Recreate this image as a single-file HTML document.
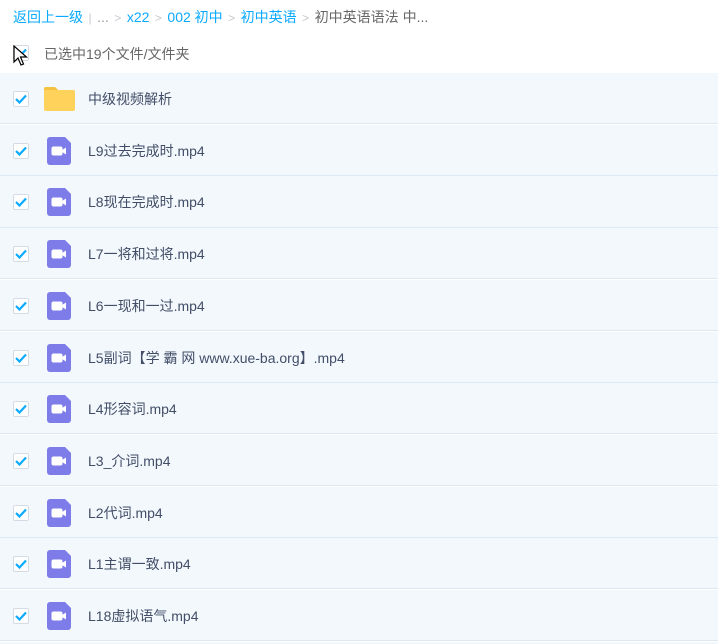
<!DOCTYPE html><html><head><meta charset="utf-8"><style>
html,body{margin:0;width:718px;height:644px;overflow:hidden}
body{background:#fff;font-family:"Liberation Sans","Noto Sans CJK SC",sans-serif;position:relative}
.bc{position:absolute;left:13px;top:7px;font-size:14px;color:#09aaff;white-space:nowrap}
.bc .g{color:#c4c8cc;margin:0 5.5px;font-size:12px}.bc .d{color:#666}
.sel{position:absolute;left:44px;top:44px;font-size:14px;color:#666}
.cb{position:absolute;width:14px;height:14px;border:1px solid #d4dbe4;border-radius:2px;background:#fff}
.cb svg{position:absolute;left:1px;top:2px}
.row{position:absolute;left:0;width:718px;height:50.2px;background:#f3f8fd;border-bottom:1.5px solid #dce8f3}
.row .t{position:absolute;left:88px;top:16px;font-size:14px;color:#424e67}
.ic{position:absolute;left:47px;top:12px;width:24px;height:28px}
</style></head><body>
<div class="bc">返回上一级<span class="g">|</span><span style="color:#999">...</span><span class="g">&gt;</span>x22<span class="g">&gt;</span>002 初中<span class="g">&gt;</span>初中英语<span class="g">&gt;</span><span class="d">初中英语语法 中...</span></div>
<div class="cb" style="left:13px;top:45px"><svg width="12" height="10"><path d="M1 5l3.5 3.5L11 1.5" stroke="#09aaff" stroke-width="2.2" fill="none"/></svg></div>
<svg style="position:absolute;left:13px;top:45px" width="16" height="22"><path d="M1 1v16l4-4 3 7 2.5-1-3-7h6z" fill="#fff" stroke="#000" stroke-width="1.2"/></svg>
<div class="sel">已选中19个文件/文件夹</div>
<div id="rows"></div>
<script>
var n=["中级视频解析","L9过去完成时.mp4","L8现在完成时.mp4","L7一将和过将.mp4","L6一现和一过.mp4","L5副词【学 霸 网 www.xue-ba.org】.mp4","L4形容词.mp4","L3_介词.mp4","L2代词.mp4","L1主谓一致.mp4","L18虚拟语气.mp4"];
var h="";
for(var i=0;i<n.length;i++){var y=73+i*51.7;
var ic=i==0?'<svg class="ic" style="left:44px;top:13px;width:31px;height:25px" viewBox="0 0 31 25"><path d="M0 3a2 2 0 012-2h9l3 3h15a2 2 0 012 2v17a2 2 0 01-2 2H2a2 2 0 01-2-2z" fill="#ffd25c"/><path d="M0 3a2 2 0 012-2h9l3 3H0z" fill="#f5c242"/></svg>'
:'<svg class="ic" viewBox="0 0 24 28"><path d="M3 0h15l6 6v19a3 3 0 01-3 3H3a3 3 0 01-3-3V3a3 3 0 013-3z" fill="#7d7ce9"/><rect x="4.5" y="9.5" width="11" height="9" rx="2" fill="#fff"/><path d="M15 13l4-2.5v7l-4-2.5z" fill="#fff"/></svg>';
h+='<div class="row" style="top:'+y+'px"><div class="cb" style="left:13px;top:18px"><svg width="12" height="10"><path d="M1 5l3.5 3.5L11 1.5" stroke="#09aaff" stroke-width="2.2" fill="none"/></svg></div>'+ic+'<div class="t">'+n[i]+'</div></div>';}
h+='<div style="position:absolute;left:0;top:642px;width:718px;height:2px;background:#f3f8fd"></div>';
document.getElementById("rows").innerHTML=h;
</script>
</body></html>
